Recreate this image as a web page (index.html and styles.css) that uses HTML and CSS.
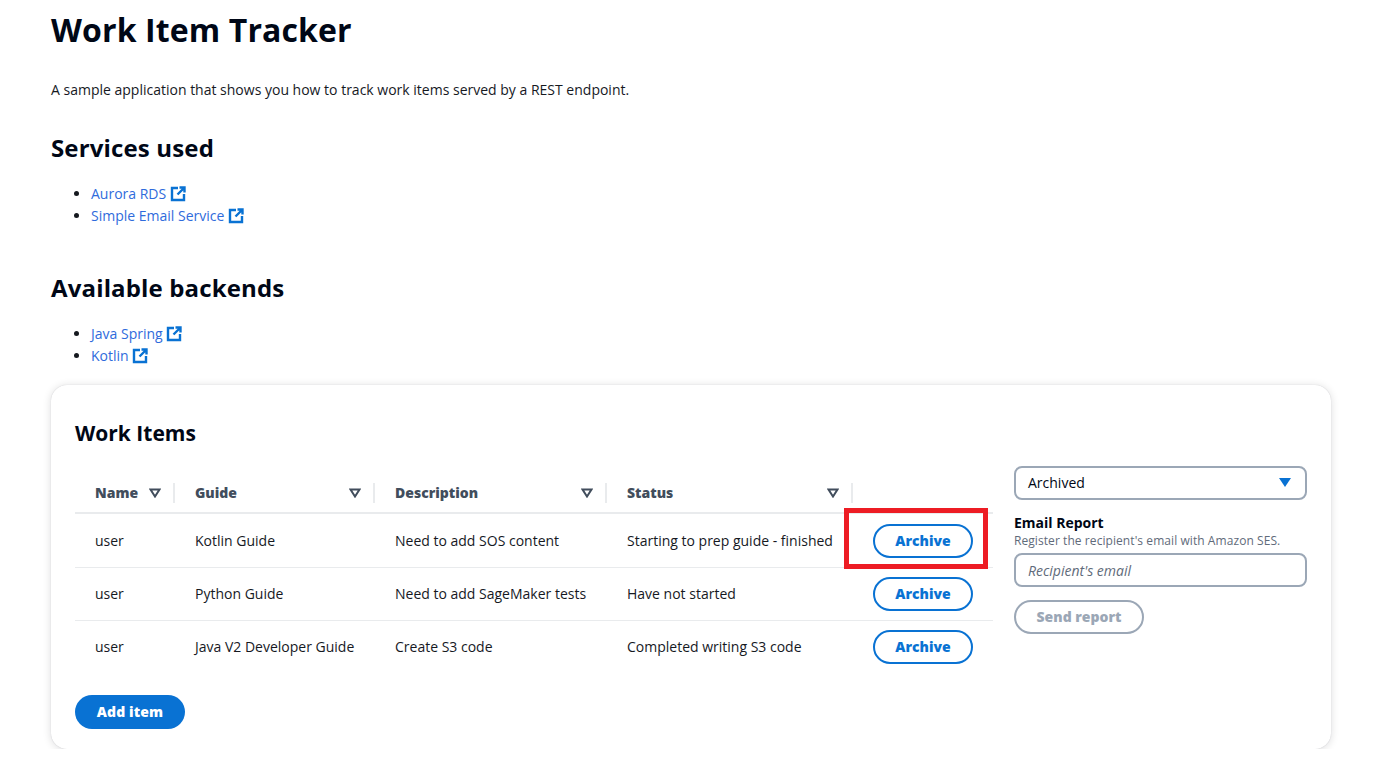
FILE: index.html
```html
<!DOCTYPE html>
<html lang="en">
<head>
    <meta charset="UTF-8">
    <title>Work Item Tracker</title>
    <link rel="stylesheet" href="styles.css">
</head>
<body>
    <h1>Work Item Tracker</h1>
    <p class="intro">A sample application that shows you how to track work items served by a REST endpoint.</p>

    <h2 class="services-title">Services used</h2>
    <ul>
        <li><a href="#">Aurora RDS<svg class="ext" viewBox="0 0 16 16"><path d="M8 2H2v12h12V8M7.5 8.5L14 2M9.5 1.5h5v5"/></svg></a></li>
        <li><a href="#">Simple Email Service<svg class="ext" viewBox="0 0 16 16"><path d="M8 2H2v12h12V8M7.5 8.5L14 2M9.5 1.5h5v5"/></svg></a></li>
    </ul>

    <h2 class="backends-title">Available backends</h2>
    <ul>
        <li><a href="#">Java Spring<svg class="ext" viewBox="0 0 16 16"><path d="M8 2H2v12h12V8M7.5 8.5L14 2M9.5 1.5h5v5"/></svg></a></li>
        <li><a href="#">Kotlin<svg class="ext" viewBox="0 0 16 16"><path d="M8 2H2v12h12V8M7.5 8.5L14 2M9.5 1.5h5v5"/></svg></a></li>
    </ul>

    <section class="card">
        <h3>Work Items</h3>
        <div class="card-body">
            <div class="table-side">
                <table>
                    <colgroup>
                        <col class="col-name">
                        <col class="col-guide">
                        <col class="col-desc">
                        <col class="col-status">
                        <col class="col-action">
                    </colgroup>
                    <thead>
                        <tr>
                            <th><div class="th-inner">Name<svg class="sort" viewBox="0 0 12 10"><path d="M1.5 1.5h9L6 8.5z"/></svg></div></th>
                            <th><div class="th-inner">Guide<svg class="sort" viewBox="0 0 12 10"><path d="M1.5 1.5h9L6 8.5z"/></svg></div></th>
                            <th><div class="th-inner">Description<svg class="sort" viewBox="0 0 12 10"><path d="M1.5 1.5h9L6 8.5z"/></svg></div></th>
                            <th><div class="th-inner">Status<svg class="sort" viewBox="0 0 12 10"><path d="M1.5 1.5h9L6 8.5z"/></svg></div></th>
                            <th></th>
                        </tr>
                    </thead>
                    <tbody>
                        <tr>
                            <td>user</td>
                            <td>Kotlin Guide</td>
                            <td>Need to add SOS content</td>
                            <td>Starting to prep guide - finished</td>
                            <td><button class="btn-outline">Archive</button><span class="highlight"></span></td>
                        </tr>
                        <tr>
                            <td>user</td>
                            <td>Python Guide</td>
                            <td>Need to add SageMaker tests</td>
                            <td>Have not started</td>
                            <td><button class="btn-outline">Archive</button></td>
                        </tr>
                        <tr>
                            <td>user</td>
                            <td>Java V2 Developer Guide</td>
                            <td>Create S3 code</td>
                            <td>Completed writing S3 code</td>
                            <td><button class="btn-outline">Archive</button></td>
                        </tr>
                    </tbody>
                </table>
                <button class="btn-primary">Add item</button>
            </div>
            <aside class="report">
                <div class="select">Archived<svg class="caret" viewBox="0 0 12 10"><path d="M0 0h12L6 9z"/></svg></div>
                <label class="report-label">Email Report</label>
                <div class="report-desc">Register the recipient's email with Amazon SES.</div>
                <input class="email" type="text" placeholder="Recipient's email">
                <button class="btn-disabled">Send report</button>
            </aside>
        </div>
    </section>
</body>
</html>
```

FILE: styles.css
```css
* {
    box-sizing: border-box;
}

body {
    margin: 0;
    padding: 0 45px 0 51px;
    font-family: "Open Sans", sans-serif;
    font-size: 14px;
    line-height: 20px;
    color: #16191f;
    background: #fff;
}

h1 {
    margin: 0;
    padding-top: 10px;
    font-size: 32px;
    line-height: 40px;
    font-weight: 700;
    letter-spacing: 0.12px;
    color: #000716;
}

.intro {
    margin: 30px 0 0;
}

h2 {
    margin: 0;
    font-size: 24px;
    line-height: 30px;
    font-weight: 700;
    letter-spacing: 0.15px;
    color: #000716;
}

.services-title {
    margin-top: 33px;
}

.backends-title {
    margin-top: 46px;
}

ul {
    margin: 20px 0 0;
    padding-left: 40px;
}

li {
    height: 22px;
    line-height: 22px;
}

a {
    color: #2f6bdc;
    text-decoration: none;
}

.ext {
    width: 16px;
    height: 16px;
    margin-left: 3.6px;
    vertical-align: -3px;
    fill: none;
    stroke: #0972d3;
    stroke-width: 2.4;
}

.card {
    margin-top: 18px;
    height: 364px;
    padding: 34px 24px 20px;
    background: #fff;
    border-radius: 16px;
    box-shadow: 0 0 1px rgba(0, 7, 22, 0.2), 0 1px 9px rgba(0, 7, 22, 0.14);
}

h3 {
    margin: 0;
    font-size: 21px;
    line-height: 28px;
    font-weight: 700;
    color: #000716;
}

.card-body {
    display: flex;
    gap: 21px;
    margin-top: 19px;
}

.table-side {
    width: 918px;
}

table {
    width: 100%;
    table-layout: fixed;
    border-collapse: collapse;
}

.col-name { width: 100px; }
.col-guide { width: 200px; }
.col-desc { width: 232px; }
.col-status { width: 246px; }
.col-action { width: 140px; }

th {
    height: 47px;
    padding: 0;
    text-align: left;
    font-weight: 800;
    color: #414d5c;
    border-bottom: 2px solid #e9ebed;
}

.th-inner {
    display: flex;
    align-items: center;
    justify-content: space-between;
    height: 20px;
    margin-top: 8px;
    padding: 0 12px 0 20px;
    border-right: 2px solid #e9ebed;
}

th:last-child .th-inner {
    border: 0;
}

.sort {
    width: 12px;
    height: 10px;
    fill: none;
    stroke: #414d5c;
    stroke-width: 2;
}

td {
    position: relative;
    height: 53px;
    padding: 0 0 0 20px;
    border-bottom: 1px solid #e9ebed;
}

tbody tr:first-child td {
    height: 54px;
    padding-top: 1px;
}

tbody tr:last-child td {
    border-bottom: 0;
}

.btn-outline {
    display: block;
    width: 100px;
    height: 34px;
    padding: 0;
    font: 800 14px/20px "Open Sans", sans-serif;
    color: #0972d3;
    background: #fff;
    border: 2px solid #0972d3;
    border-radius: 20px;
}

.highlight {
    position: absolute;
    left: -9px;
    right: 5px;
    top: -6px;
    bottom: -2px;
    border: 5px solid #ed1c24;
    pointer-events: none;
}

.btn-primary {
    display: block;
    width: 110px;
    height: 34px;
    margin-top: 22px;
    padding: 0;
    font: 800 14px/20px "Open Sans", sans-serif;
    letter-spacing: 0.1px;
    color: #fff;
    background: #0972d3;
    border: 0;
    border-radius: 20px;
}

.report {
    width: 293px;
}

.select {
    display: flex;
    align-items: center;
    justify-content: space-between;
    height: 34px;
    padding: 0 14px 0 12px;
    color: #000716;
    border: 2px solid #9ba7b6;
    border-radius: 8px;
}

.caret {
    width: 12px;
    height: 10px;
    fill: #0972d3;
}

.report-label {
    display: block;
    margin-top: 13px;
    font-weight: 700;
    color: #000716;
}

.report-desc {
    font-size: 12px;
    line-height: 16px;
    letter-spacing: 0.07px;
    color: #5f6b7a;
}

.email {
    display: block;
    width: 100%;
    height: 34px;
    margin-top: 4px;
    padding: 0 12px;
    font: italic 14px "Open Sans", sans-serif;
    color: #000716;
    border: 2px solid #9ba7b6;
    border-radius: 8px;
    outline: none;
}

.email::placeholder {
    color: #5f6b7a;
    opacity: 1;
}

.btn-disabled {
    display: block;
    width: 130px;
    height: 34px;
    margin-top: 13px;
    padding: 0;
    font: 800 14px/20px "Open Sans", sans-serif;
    color: #9ba7b6;
    background: #fff;
    border: 2px solid #9ba7b6;
    border-radius: 20px;
}
```
